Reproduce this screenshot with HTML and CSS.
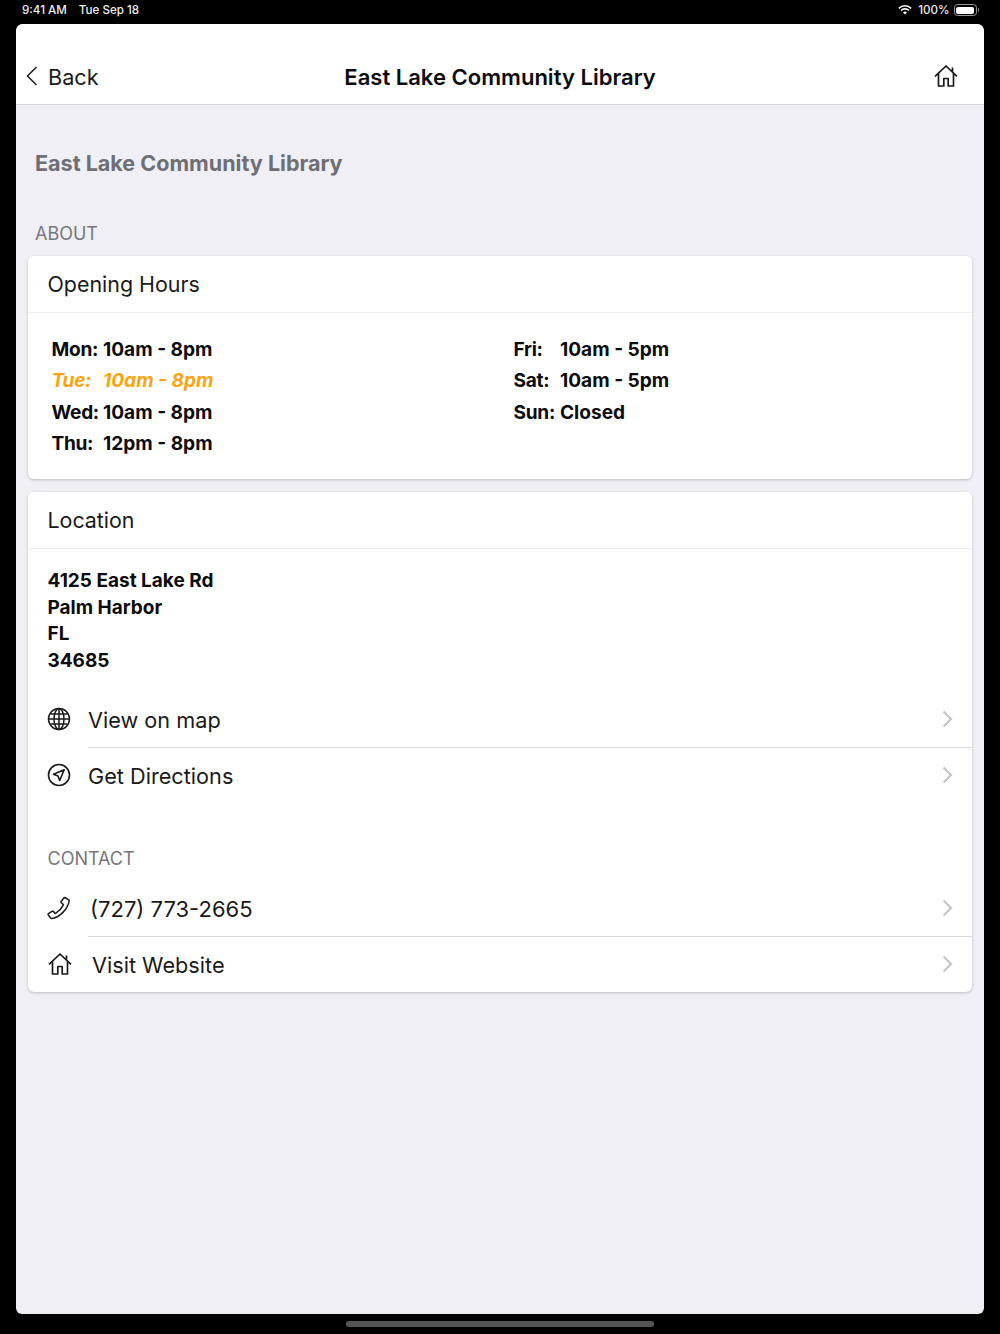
FILE: index.html
```html
<!DOCTYPE html>
<html lang="en">
<head>
<meta charset="utf-8">
<title>East Lake Community Library</title>
<link rel="stylesheet" href="styles.css">
</head>
<body>
<div class="status">
  <div class="status-left"><span>9:41 AM</span><span>Tue Sep 18</span></div>
  <div class="status-right">
    <svg class="wifi" viewBox="0 0 16 12"><path d="M8 11.5 5.6 9a3.4 3.4 0 0 1 4.8 0zM3.900 7.300l-1.300-1.300a7.600 7.600 0 0 1 10.800 0l-1.300 1.300a5.800 5.800 0 0 0-8.200 0zM1.300 4.700 0 3.400a11.300 11.300 0 0 1 16 0l-1.300 1.300a9.500 9.500 0 0 0-13.400 0z" fill="#fff"/></svg>
    <span>100%</span>
    <span class="battery"><span class="battery-fill"></span></span><span class="battery-tip"></span>
  </div>
</div>
<main class="sheet">
  <header class="nav">
    <a class="back">
      <svg class="back-icon" viewBox="0 0 12 20"><path d="M10.500 1 1.500 10l9 9" fill="none" stroke="#222" stroke-width="1.600"/></svg>
      <span>Back</span>
    </a>
    <h1 class="nav-title">East Lake Community Library</h1>
    <svg class="nav-home" viewBox="0 0 24 24"><use href="#home"/></svg>
  </header>
  <div class="content">
    <h2 class="page-title">East Lake Community Library</h2>
    <div class="section-label about-label">ABOUT</div>
    <section class="card">
      <div class="card-head">Opening Hours</div>
      <div class="hours">
        <div class="hours-col">
          <div class="hr"><span class="day">Mon:</span><span>10am - 8pm</span></div>
          <div class="hr today"><span class="day">Tue:</span><span>10am - 8pm</span></div>
          <div class="hr"><span class="day">Wed:</span><span>10am - 8pm</span></div>
          <div class="hr"><span class="day">Thu:</span><span>12pm - 8pm</span></div>
        </div>
        <div class="hours-col">
          <div class="hr"><span class="day">Fri:</span><span>10am - 5pm</span></div>
          <div class="hr"><span class="day">Sat:</span><span>10am - 5pm</span></div>
          <div class="hr"><span class="day">Sun:</span><span>Closed</span></div>
        </div>
      </div>
    </section>
    <section class="card card-location">
      <div class="card-head">Location</div>
      <address class="address">4125 East Lake Rd<br>Palm Harbor<br>FL<br>34685</address>
      <a class="row row-map">
        <svg class="row-icon" viewBox="0 0 24 24" fill="none" stroke="#1a1a1a" stroke-width="1.500"><circle cx="12" cy="12" r="10.500"/><ellipse cx="12" cy="12" rx="5" ry="10.500"/><path d="M12 1.500v21M1.500 12h21M3.400 7h17.200M3.400 17h17.200"/></svg>
        <span class="row-text">View on map</span>
        <svg class="chev" viewBox="0 0 11 18"><path d="M1.500 1.500 9 9l-7.500 7.500" fill="none" stroke="#c4c4c9" stroke-width="2.200"/></svg>
      </a>
      <a class="row row-dir">
        <svg class="row-icon" viewBox="0 0 24 24" fill="none" stroke="#1a1a1a" stroke-width="1.600"><circle cx="12" cy="12" r="10.500"/><path d="M17.200 6.800 6.500 11.300l4.500 1.700 1.700 4.500z" stroke-linejoin="round"/></svg>
        <span class="row-text">Get Directions</span>
        <svg class="chev" viewBox="0 0 11 18"><path d="M1.500 1.500 9 9l-7.500 7.500" fill="none" stroke="#c4c4c9" stroke-width="2.200"/></svg>
      </a>
      <div class="section-label contact-label">CONTACT</div>
      <a class="row row-phone">
        <svg class="row-icon" viewBox="0 0 24 24" fill="none" stroke="#1a1a1a" stroke-width="1.500" stroke-linejoin="round"><path d="M17.800 1.500l4 2.400c.4.300.5.700.4 1.200C20.500 13.500 13 21 5 22.500c-.5.100-1 0-1.300-.4L1.300 19c-.3-.5-.2-1 .2-1.300l3.400-2.400c.4-.3.900-.2 1.300.1l1.700 1.700c.3.300.7.300 1 .1 3.200-1.900 5.700-4.700 7.300-8 .2-.4.100-.8-.2-1l-1.700-1.500c-.4-.3-.4-.8-.2-1.200l2.500-3.300c.3-.4.700-.5 1.200-.2z"/></svg>
        <span class="row-text">(727) 773-2665</span>
        <svg class="chev" viewBox="0 0 11 18"><path d="M1.500 1.500 9 9l-7.500 7.500" fill="none" stroke="#c4c4c9" stroke-width="2.200"/></svg>
      </a>
      <a class="row row-web">
        <svg class="row-icon home-icon" viewBox="0 0 24 24"><use href="#home"/></svg>
        <span class="row-text">Visit Website</span>
        <svg class="chev" viewBox="0 0 11 18"><path d="M1.500 1.500 9 9l-7.500 7.500" fill="none" stroke="#c4c4c9" stroke-width="2.200"/></svg>
      </a>
    </section>
  </div>
</main>
<div class="home-area"><span class="home-bar"></span></div>
<svg class="defs" width="0" height="0"><defs><symbol id="home" viewBox="0 0 24 24"><path d="M1 12.300 12 2l11 10.300M4.500 9.500V22h5.300v-7.500h4.400V22h5.300V9.500M18.500 3.500v4" fill="none" stroke="#1a1a1a" stroke-width="1.700" stroke-linejoin="round"/></symbol></defs></svg>
</body>
</html>
```
FILE: styles.css
```css
* { box-sizing: border-box; }
html, body { margin: 0; height: 1334px; overflow: hidden; }
body {
  background: #000;
  font-family: Inter, "Liberation Sans", sans-serif;
  color: #111;
  display: flex;
  flex-direction: column;
}
.defs { position: absolute; }
.status {
  height: 24px;
  padding: 0 21px 4px 22px;
  display: flex;
  justify-content: space-between;
  align-items: center;
  color: #eee;
  font-size: 11.600px;
  font-weight: 500;
}
.status-left { display: flex; gap: 12px; }
.status-right { display: flex; align-items: center; }
.wifi { width: 14px; height: 10px; margin-right: 6px; }
.battery {
  width: 23px; height: 12px; margin-left: 4px; padding: 1.500px;
  border: 1px solid #999; border-radius: 3.500px; display: block;
}
.battery-fill { display: block; height: 100%; background: #fff; border-radius: 2px; }
.battery-tip { width: 1.500px; height: 4px; background: #888; margin-left: 1px; border-radius: 0 1px 1px 0; }
.sheet {
  height: 1290px;
  margin: 0 16px;
  background: #efeff5;
  border-radius: 7px 7px 6px 6px;
  overflow: hidden;
  display: flex;
  flex-direction: column;
}
.nav {
  height: 81px;
  flex: none;
  background: #fff;
  border-bottom: 1px solid #d8d8dc;
  padding: 25px 26px 0 10px;
  display: flex;
  align-items: center;
  justify-content: space-between;
  position: relative;
}
.back { display: flex; align-items: center; gap: 10px; font-size: 21.700px; color: #1a1a1a; }
.back-icon { width: 12px; height: 20px; margin-bottom: 2px; }
.nav-title {
  margin: 0;
  position: absolute;
  left: 0; right: 0;
  top: 38px;
  text-align: center;
  font-size: 22.050px;
  line-height: 30px;
  font-weight: 600;
  color: #0c0c0c;
}
.nav-home { width: 24px; height: 24px; margin-bottom: 2px; }
.content { padding: 0 12px; }
.page-title {
  margin: 43px 0 0 7px;
  font-size: 21.550px;
  line-height: 30px;
  font-weight: 700;
  color: #6e6e75;
}
.section-label { font-size: 18px; line-height: 24px; color: #77777e; }
.about-label { margin: 44px 0 10px 7px; }
.card {
  background: #fff;
  border-radius: 6px;
  box-shadow: 0 1px 3px rgba(0, 0, 0, .22);
}
.card-head {
  height: 57px;
  padding: 0 19.500px;
  display: flex;
  align-items: center;
  font-size: 21.400px;
  color: #1a1a1a;
  border-bottom: 1px solid #efeff2;
}
.hours {
  display: grid;
  grid-template-columns: 462px 1fr;
  padding: 20px 23.500px 20px;
  height: 166px;
}
.hr {
  display: flex;
  height: 31.500px;
  align-items: center;
  font-size: 19.100px;
  font-weight: 650;
  color: #0c0c0c;
}
.day { width: 46px; margin-right: 5.500px; letter-spacing: -.3px; }
.hours-col:last-child .day { margin-right: .5px; }
.today { color: #fca311; font-style: italic; }
.card-location { margin-top: 13px; height: 500px; }
.address {
  padding: 19px 19.500px 0;
  font-style: normal;
  font-size: 19px;
  line-height: 26.500px;
  font-weight: 650;
  color: #0c0c0c;
}
.row {
  height: 56px;
  display: flex;
  align-items: center;
  padding: 0 19px 0 19px;
  position: relative;
  color: #1a1a1a;
}
.row-text { font-size: 21.700px; margin-left: 17px; flex: 1; }
.row-icon { width: 24px; height: 24px; flex: none; margin-bottom: 2px; }
.chev { width: 11px; height: 18px; flex: none; margin-bottom: 2px; }
.row-map { margin-top: 18px; }
.row-map::after, .row-phone::after {
  content: "";
  position: absolute;
  right: 0; bottom: 0;
  left: 60px;
  height: 1px;
  background: #dcdcdf;
}
.row-phone .row-text { margin-left: 19px; font-size: 22px; }
.row-web .row-text { margin-left: 20px; }
.home-icon { margin-left: 1px; }
.contact-label { margin: 43px 0 10px 19.500px; }
.home-area { flex: 1; display: flex; justify-content: center; padding-top: 7px; }
.home-bar { width: 308px; height: 6px; border-radius: 3px; background: #555; }
```
